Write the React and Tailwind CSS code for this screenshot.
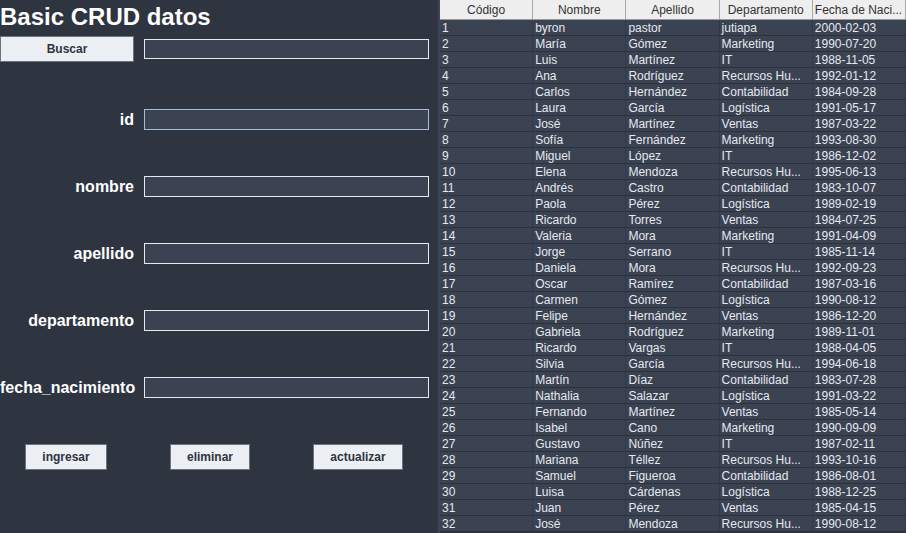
const rows = [
  ["1", "byron", "pastor", "jutiapa", "2000-02-03"],
  ["2", "María", "Gómez", "Marketing", "1990-07-20"],
  ["3", "Luis", "Martínez", "IT", "1988-11-05"],
  ["4", "Ana", "Rodríguez", "Recursos Hu...", "1992-01-12"],
  ["5", "Carlos", "Hernández", "Contabilidad", "1984-09-28"],
  ["6", "Laura", "García", "Logística", "1991-05-17"],
  ["7", "José", "Martínez", "Ventas", "1987-03-22"],
  ["8", "Sofía", "Fernández", "Marketing", "1993-08-30"],
  ["9", "Miguel", "López", "IT", "1986-12-02"],
  ["10", "Elena", "Mendoza", "Recursos Hu...", "1995-06-13"],
  ["11", "Andrés", "Castro", "Contabilidad", "1983-10-07"],
  ["12", "Paola", "Pérez", "Logística", "1989-02-19"],
  ["13", "Ricardo", "Torres", "Ventas", "1984-07-25"],
  ["14", "Valeria", "Mora", "Marketing", "1991-04-09"],
  ["15", "Jorge", "Serrano", "IT", "1985-11-14"],
  ["16", "Daniela", "Mora", "Recursos Hu...", "1992-09-23"],
  ["17", "Oscar", "Ramírez", "Contabilidad", "1987-03-16"],
  ["18", "Carmen", "Gómez", "Logística", "1990-08-12"],
  ["19", "Felipe", "Hernández", "Ventas", "1986-12-20"],
  ["20", "Gabriela", "Rodríguez", "Marketing", "1989-11-01"],
  ["21", "Ricardo", "Vargas", "IT", "1988-04-05"],
  ["22", "Silvia", "García", "Recursos Hu...", "1994-06-18"],
  ["23", "Martín", "Díaz", "Contabilidad", "1983-07-28"],
  ["24", "Nathalia", "Salazar", "Logística", "1991-03-22"],
  ["25", "Fernando", "Martínez", "Ventas", "1985-05-14"],
  ["26", "Isabel", "Cano", "Marketing", "1990-09-09"],
  ["27", "Gustavo", "Núñez", "IT", "1987-02-11"],
  ["28", "Mariana", "Téllez", "Recursos Hu...", "1993-10-16"],
  ["29", "Samuel", "Figueroa", "Contabilidad", "1986-08-01"],
  ["30", "Luisa", "Cárdenas", "Logística", "1988-12-25"],
  ["31", "Juan", "Pérez", "Ventas", "1985-04-15"],
  ["32", "José", "Mendoza", "Recursos Hu...", "1990-08-12"],
];

const headers = ["Código", "Nombre", "Apellido", "Departamento", "Fecha de Naci..."];

function Field({ label, focused }) {
  return (
    <div className="flex items-center h-[21px]">
      <div className="w-[134px] text-right text-[16px] font-bold text-white whitespace-nowrap">{label}</div>
      <div
        className={
          "ml-[10px] w-[285px] h-[21px] bg-[#3b4252] border " +
          (focused ? "border-[#a7bcd4]" : "border-[#e5e9f0]")
        }
      />
    </div>
  );
}

function Btn({ children, className }) {
  return (
    <button className={"h-[26px] bg-[#eceff4] border border-[#6b7280] text-[12px] font-bold text-[#2e3440] " + className}>
      {children}
    </button>
  );
}

export default function App() {
  return (
    <div className="flex w-[906px] h-[533px] overflow-hidden bg-[#2e3440]" style={{ fontFamily: '"Liberation Sans", Arial, sans-serif' }}>
      <div className="w-[438px] shrink-0 flex flex-col">
        <h1 className="text-[24px] font-bold text-white leading-none mt-[5px] h-[24px] whitespace-nowrap">Basic CRUD datos</h1>
        <div className="flex items-center mt-[7px]">
          <Btn className="w-[134px]">Buscar</Btn>
          <div className="ml-[10px] w-[285px] h-[20px] bg-[#3b4252] border border-[#e5e9f0]" />
        </div>
        <div className="flex flex-col gap-[46px] mt-[47px]">
          <Field label="id" focused />
          <Field label="nombre" />
          <Field label="apellido" />
          <Field label="departamento" />
          <Field label="fecha_nacimiento" />
        </div>
        <div className="flex mt-[46px]">
          <Btn className="ml-[25px] w-[82px]">ingresar</Btn>
          <Btn className="ml-[63px] w-[80px]">eliminar</Btn>
          <Btn className="ml-[63px] w-[90px]">actualizar</Btn>
        </div>
      </div>
      <div className="w-[2px] shrink-0 bg-[#3e4454]" />
      <div className="w-[466px] shrink-0 flex flex-col text-[12px]">
        <div className="grid grid-cols-5 h-[20px] bg-[#eeeeee] border-b border-[#9a9a9a] text-[#333333]">
          {headers.map((h, i) => (
            <div
              key={h}
              className={
                "flex items-center border-r border-[#a9a9a9] whitespace-nowrap overflow-hidden " +
                (i === 4 ? "justify-start pl-[2px]" : "justify-center")
              }
            >
              {h}
            </div>
          ))}
        </div>
        {rows.map((r) => (
          <div key={r[0]} className="grid grid-cols-5 h-[16px] bg-[#3b4252] border-b border-[#2b303b] text-[#e5e9f0]">
            {r.map((c, i) => (
              <div key={i} className="pl-[2px] pt-[1px] leading-[14px] border-r border-[#333947] whitespace-nowrap overflow-hidden">
                {c}
              </div>
            ))}
          </div>
        ))}
      </div>
    </div>
  );
}
